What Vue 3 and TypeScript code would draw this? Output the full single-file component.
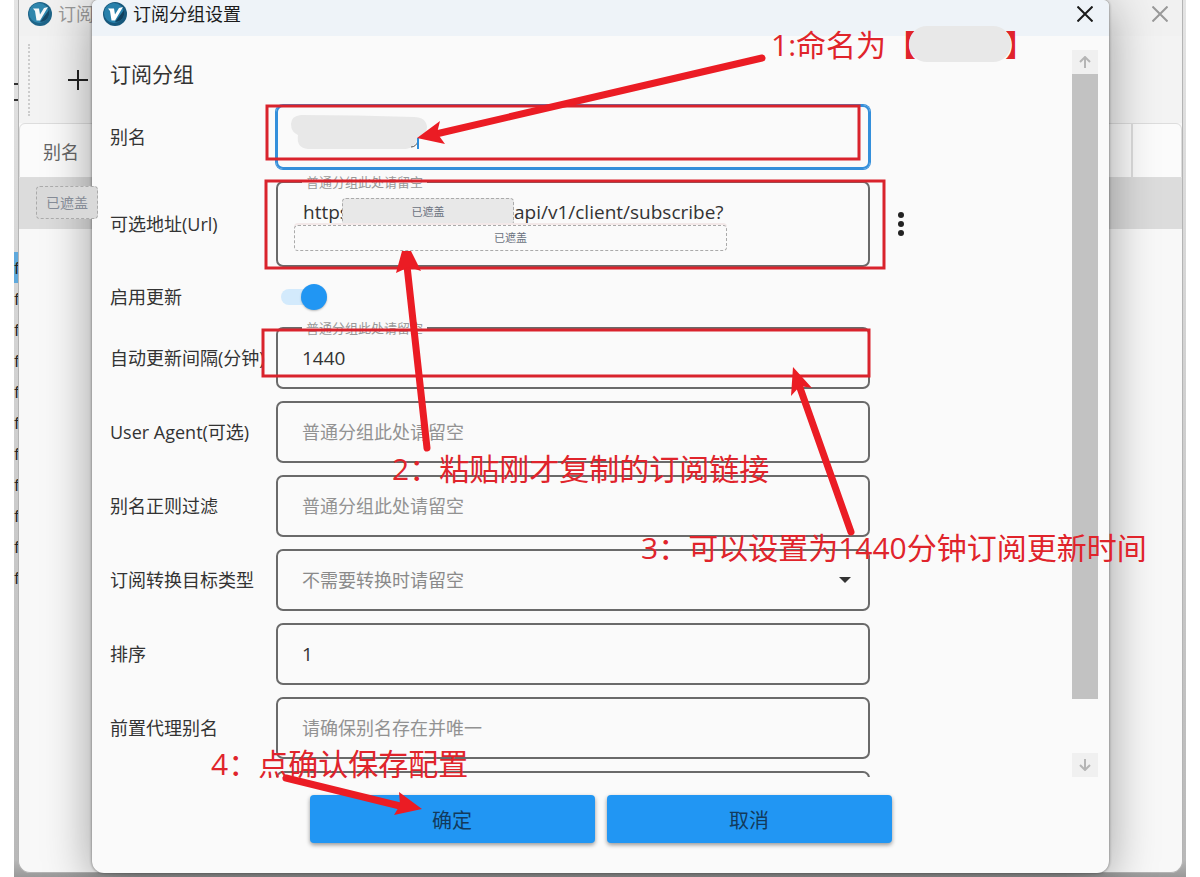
<script setup lang="ts">
import { ref } from 'vue'

interface TextRow {
  id: string
  label: string
  placeholder: string
  value: string
  floating?: boolean
}

const timing: TextRow[] = [
  { id: 'interval', label: '自动更新间隔(分钟)', placeholder: '普通分组此处请留空', value: '1440', floating: true },
  { id: 'agent', label: 'User Agent(可选)', placeholder: '普通分组此处请留空', value: '' },
  { id: 'filter', label: '别名正则过滤', placeholder: '普通分组此处请留空', value: '' },
]
const ordering: TextRow[] = [
  { id: 'sort', label: '排序', placeholder: '', value: '1' },
  { id: 'prev', label: '前置代理别名', placeholder: '请确保别名存在并唯一', value: '' },
  { id: 'next', label: '', placeholder: '', value: '' },
]
const alias = ref('')
const enabled = ref(true)
const urlHead = ref('https')
const urlTail = ref('api/v1/client/subscribe?')
const servers = Array.from({ length: 11 }, (_, i) => i)
</script>

<template>
  <main class="desktop">
    <div class="behind">
      <svg class="menu-mark" viewBox="0 0 4 18" aria-hidden="true"><path d="M0 1h4M0 17h4" /></svg>
      <ul class="servers">
        <li v-for="s in servers" :key="s" :class="{ active: s === 0 }">f</li>
      </ul>
    </div>

    <section class="window parent">
      <header class="titlebar muted">
        <svg class="logo" viewBox="0 0 24 24" aria-hidden="true">
          <circle cx="12" cy="12" r="12" fill="#1e6488" />
          <circle cx="11" cy="11" r="10" fill="#2f86ad" />
          <path d="M12 20L21 8v5q-2 7-9 7z" fill="#174a68" />
          <path d="M5 6.500h6l1 6L16 6l4-1-8 13.500H8.500L7 9z" fill="#f4f8fa" />
        </svg>
        <span class="title">订阅</span>
        <button class="close" aria-label="关闭窗口">
          <svg viewBox="0 0 16 16"><path d="M0.5 0.5l15 15M15.5 0.5l-15 15" /></svg>
        </button>
      </header>
      <div class="toolbar">
        <span class="grip"></span>
        <button class="add" aria-label="添加">
          <svg viewBox="0 0 20 20"><path d="M10 0v20M0 10h20" /></svg>
        </button>
      </div>
      <div class="grid-head"><span>别名</span><i></i></div>
      <div class="grid-row"></div>
    </section>

    <section class="window dialog" role="dialog" aria-label="订阅分组设置">
      <header class="titlebar">
        <svg class="logo" viewBox="0 0 24 24" aria-hidden="true">
          <circle cx="12" cy="12" r="12" fill="#17587c" />
          <circle cx="11" cy="11" r="10" fill="#2780ab" />
          <path d="M12 20L21 8v5q-2 7-9 7z" fill="#103f5c" />
          <path d="M5 6.500h6l1 6L16 6l4-1-8 13.500H8.500L7 9z" fill="#fff" />
        </svg>
        <span class="title">订阅分组设置</span>
        <button class="close" aria-label="关闭">
          <svg viewBox="0 0 16 16"><path d="M0.5 0.5l15 15M15.5 0.5l-15 15" /></svg>
        </button>
      </header>

      <div class="body">
        <form class="form" @submit.prevent>
          <h1>订阅分组</h1>
          <div class="row">
            <label for="alias">别名</label>
            <div class="field tall focused">
              <input id="alias" v-model="alias" type="text" />
              <svg class="smudge" viewBox="0 0 140 36" aria-hidden="true">
                <path d="M11 1Q1 2 1 10Q1 18 8 21Q6 34 18 35H116Q124 34 127 26Q137 22 137 13Q136 3 124 3Q66 1 11 1Z" fill="#e8e8e8" />
                <path d="M121 33q5 0 7-6" stroke="#555" fill="none" />
                <path d="M128 24v11" stroke="#2d8ddb" stroke-width="2" />
              </svg>
            </div>
          </div>
          <div class="row">
            <label for="url">可选地址(Url)</label>
            <div class="field address">
              <span class="floating">普通分组此处请留空</span>
              <div class="line">
                <input id="url" v-model="urlHead" class="head" type="text" />
                <span class="mask solid">已遮盖</span>
                <input v-model="urlTail" aria-label="地址路径" type="text" />
              </div>
              <span class="mask long">已遮盖</span>
            </div>
            <button class="more" type="button" aria-label="更多">
              <svg viewBox="0 0 6 24"><circle cx="3" cy="3" r="3" /><circle cx="3" cy="12" r="3" /><circle cx="3" cy="21" r="3" /></svg>
            </button>
          </div>
          <div class="row">
            <label for="enabled">启用更新</label>
            <div class="switch-cell"><input id="enabled" v-model="enabled" class="switch" type="checkbox" /></div>
          </div>
          <div v-for="r in timing" :key="r.id" class="row">
            <label :for="r.id">{{ r.label }}</label>
            <div class="field">
              <span v-if="r.floating" class="floating">{{ r.placeholder }}</span>
              <input :id="r.id" type="text" :placeholder="r.placeholder" :value="r.value" />
            </div>
          </div>
          <div class="row">
            <label for="target">订阅转换目标类型</label>
            <div class="field">
              <select id="target"><option>不需要转换时请留空</option></select>
              <svg class="caret" viewBox="0 0 12 6" aria-hidden="true"><path d="M0 0h12L6 6z" /></svg>
            </div>
          </div>
          <div v-for="r in ordering" :key="r.id" class="row">
            <label :for="r.id">{{ r.label }}</label>
            <div class="field"><input :id="r.id" type="text" :placeholder="r.placeholder" :value="r.value" /></div>
          </div>
        </form>
        <div class="scroll">
          <button type="button" aria-label="向上"><svg viewBox="0 0 12 12"><path d="M6 12V1M1 6l5-5 5 5" /></svg></button>
          <div class="track"><div class="thumb"></div></div>
          <button type="button" aria-label="向下"><svg viewBox="0 0 12 12"><path d="M6 0v11M1 6l5 5 5-5" /></svg></button>
        </div>
      </div>

      <footer class="actions">
        <button type="button">确定</button>
        <button type="button">取消</button>
      </footer>
    </section>

    <span class="mask row-mask">已遮盖</span>

    <svg class="notes">
      <g class="frames">
        <rect x="267" y="106" width="592" height="53" />
        <rect x="266" y="181" width="618" height="87" />
        <rect x="263" y="330" width="606" height="46" />
      </g>
      <g class="arrows">
        <path d="M762 58L436 134" />
        <path d="M427 448L407 266" />
        <path d="M851 532L799 385" />
        <path d="M286 778L400 806" />
      </g>
      <g class="heads">
        <path d="M417 138L440 121L437 133L445 144Z" />
        <path d="M402 251H411L421 271L409 267L396 273Z" />
        <path d="M793 367L812 388L800 386L791 396Z" />
        <path d="M422 809L399 792L400 805L394 815Z" />
      </g>
      <g class="words">
        <text x="771" y="56">1:命名为【</text>
        <text x="1005" y="56">】</text>
        <text x="392" y="480">2：粘贴刚才复制的订阅链接</text>
        <text x="641" y="559">3：可以设置为1440分钟订阅更新时间</text>
        <text x="211" y="775">4：点确认保存配置</text>
      </g>
      <rect class="blot" x="909" y="26" width="102" height="36" rx="18" />
    </svg>
  </main>
</template>

<style>
html, body { margin: 0; background: #fff; overflow: hidden; }
</style>

<style scoped>
* { box-sizing: border-box; }
.desktop {
  position: relative;
  height: 100vh;
  min-height: 600px;
  overflow: hidden;
  color: #333;
  font-family: "Open Sans", "Noto Sans CJK SC", sans-serif;
  font-size: 18px;
}
button { border: 0; padding: 0; background: none; font: inherit; color: inherit; }
svg { display: block; }
.behind {
  position: absolute;
  inset: 0 14px 0 14px;
  padding-top: 83px;
  background: linear-gradient(#e4e4e4, #cacaca 60%, #b8b8b8 98%, #999);
}
.menu-mark { width: 4px; height: 18px; margin-bottom: 151px; stroke: #333; stroke-width: 2; }
.servers { list-style: none; margin: 0; padding: 0; width: 6px; }
.servers li { height: 31px; line-height: 31px; font-size: 17px; color: #222; }
.servers .active { background: #5fa9dc; }
.window { position: absolute; bottom: 4px; display: flex; flex-direction: column; overflow: hidden; }
.parent {
  top: 0;
  left: 18px;
  right: 17px;
  background: #f8f8f8;
  border: 1px solid #b4b4b4;
  border-top: 0;
  border-radius: 0 0 12px 12px;
}
.dialog {
  top: 0;
  left: 92px;
  right: 91px;
  background: #fafafa;
  border-radius: 6px 6px 12px 12px;
  box-shadow: 0 8px 48px rgba(0, 0, 0, 0.38), 0 0 3px rgba(0, 0, 0, 0.5);
}
.titlebar {
  flex: none;
  display: flex;
  align-items: center;
  gap: 6px;
  height: 36px;
  padding: 0 16px 8px 11px;
  background: #eef3f8;
  color: #1b1b1b;
}
.muted { background: #f1f1f1; color: #999; padding-left: 9px; padding-right: 14px; }
.logo { width: 24px; height: 24px; }
.title { flex: 1; line-height: 28px; }
.close svg { width: 16px; height: 16px; fill: none; stroke: currentColor; stroke-width: 2; }
.toolbar { height: 87px; display: flex; align-items: center; gap: 38px; padding-left: 9px; background: #f3f3f3; }
.grip { height: 72px; border-left: 2px dotted #ccc; }
.add svg { width: 20px; height: 20px; stroke: #222; stroke-width: 2; }
.grid-head {
  height: 55px;
  display: flex;
  align-items: center;
  justify-content: space-between;
  padding: 0 48px 0 23px;
  color: #666;
  border: 1px solid #ddd;
  border-radius: 6px 6px 0 0;
  background: #fbfbfb;
}
.grid-head i { height: 100%; border-left: 2px solid #ddd; }
.grid-row { height: 51px; background: #dcdcdc; }

.body { flex: 1; min-height: 0; display: flex; overflow: hidden; }
.form {
  flex: 1;
  display: flex;
  flex-direction: column;
  gap: 12px;
  padding: 23px 0 0 18px;
  overflow: hidden;
}
h1 { margin: 0 0 4px; font-size: 21px; line-height: 30px; font-weight: 400; }
.row { display: grid; grid-template-columns: 166px 1fr 202px; align-items: center; flex: none; }
.row > label { white-space: nowrap; line-height: 24px; }
.field {
  position: relative;
  height: 62px;
  border: 2px solid #6a6a6a;
  border-radius: 7px;
  display: flex;
  align-items: center;
}
.tall { height: 64px; }
.focused { border-color: #348fdb; box-shadow: 0 0 0 1px #348fdb; }
.field input, .field select {
  width: 100%;
  min-width: 0;
  height: 100%;
  margin: 0;
  padding: 0 24px;
  border: 0;
  outline: 0;
  appearance: none;
  background: none;
  font: inherit;
  font-size: 19px;
  color: #333;
}
.field select { font-size: 18px; color: #8a8a8a; }
.field input::placeholder { font-size: 18px; color: #929292; opacity: 1; }
.floating {
  position: absolute;
  top: -10px;
  left: 24px;
  padding: 0 4px;
  background: #fafafa;
  font-size: 13px;
  line-height: 18px;
  color: #999;
}
.smudge { position: absolute; left: 12px; top: 7px; width: 140px; height: 36px; }
.caret { position: absolute; right: 17px; width: 12px; height: 6px; fill: #333; }
.address { height: 86px; flex-direction: column; align-items: flex-start; padding: 15px 0 0 16px; }
.line { display: flex; width: 100%; height: 27px; }
.address .line input { padding: 0; }
.address .line .head { flex: none; width: 48px; padding-left: 9px; }
.mask {
  flex: none;
  display: flex;
  align-items: center;
  justify-content: center;
  border: 1px dashed #aaa;
  border-radius: 4px;
  font-size: 11px;
  line-height: 16px;
  color: #6b7280;
}
.solid { width: 172px; background: #e8e8e8; }
.long { width: calc(100% - 141px); height: 26px; background: #fafafa; box-shadow: 0 -2px 0 #f3e9e9; }
.row-mask {
  position: absolute;
  left: 36px;
  top: 186px;
  width: 62px;
  height: 33px;
  font-size: 14px;
  color: #858b96;
  background: #d9d9d9;
}
.more { width: 6px; margin-left: 28px; }
.more svg { width: 6px; height: 24px; fill: #222; }
.switch-cell { display: flex; align-items: center; height: 36px; padding-left: 5px; }
.switch {
  appearance: none;
  display: flex;
  align-items: center;
  justify-content: flex-end;
  width: 46px;
  height: 16px;
  margin: 0;
  border-radius: 8px;
  background: #d3eafc;
}
.switch::before {
  content: "";
  width: 26px;
  height: 26px;
  border-radius: 50%;
  background: #2196f3;
  box-shadow: 0 1px 2px rgba(0, 0, 0, 0.25);
}
.scroll {
  flex: none;
  width: 26px;
  margin: 14px 11px 0 0;
  display: flex;
  flex-direction: column;
}
.scroll button { flex: none; height: 24px; display: grid; place-items: center; background: #f0f0f0; }
.scroll svg { width: 12px; height: 12px; fill: none; stroke: #b5b5b5; stroke-width: 2; }
.track { flex: 1; }
.thumb { height: 92%; background: #c2c2c2; }
.actions { flex: none; display: flex; justify-content: center; gap: 12px; padding: 18px 0 30px; }
.actions button {
  width: 285px;
  height: 48px;
  border-radius: 4px;
  background: #2196f3;
  color: #123a5c;
  font-size: 20px;
  box-shadow: 0 2px 4px rgba(0, 0, 0, 0.4);
}
.notes { position: absolute; inset: 0; width: 100%; height: 100%; pointer-events: none; }
.frames { fill: none; stroke: #d9232c; stroke-width: 3; }
.arrows { fill: none; stroke: #eb1c24; stroke-width: 7; stroke-linecap: round; }
.heads { fill: #eb1c24; }
.words { fill: #e0242b; font-size: 30px; }
.blot { fill: #e8e8e8; }
</style>
